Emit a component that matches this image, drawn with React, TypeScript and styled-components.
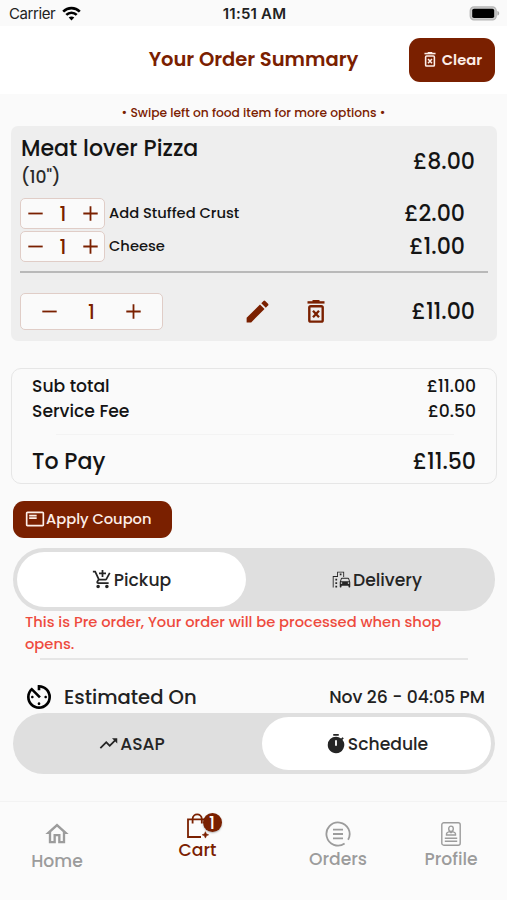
import React from 'react';
import styled, { createGlobalStyle } from 'styled-components';
import {
  MdAddShoppingCart,
  MdAvTimer,
  MdEdit,
  MdEmojiTransportation,
  MdOutlineFeaturedPlayList,
  MdOutlineHome,
  MdTimer,
  MdTrendingUp,
} from 'react-icons/md';

const brand = '#7a2000';
const ink = '#141414';

const text = { xs: 12.27, sm: 14.7, md: 17.19, lg: 19.6, xl: 22.1 };

const GlobalStyle = createGlobalStyle`
  * { box-sizing: border-box; }
  body { margin: 0; background: #fafafa; }
  svg { display: block; flex: none; }
`;

const Screen = styled.div`
  display: flex;
  flex-direction: column;
  width: 507px;
  height: 900px;
  overflow: hidden;
  background: #fafafa;
  color: ${ink};
  font-family: Poppins, Inter, sans-serif;
`;

const Label = styled.span<{ $size: number; $weight?: number; $color?: string }>`
  font-size: ${p => p.$size}px;
  font-weight: ${p => p.$weight ?? 500};
  color: ${p => p.$color ?? 'inherit'};
  line-height: 22px;
  white-space: nowrap;
`;

const StatusBar = styled.div`
  display: grid;
  grid-template-columns: 1fr auto 1fr;
  align-items: center;
  height: 26px;
  padding: 1px 7px 0 9px;
  font-family: Inter, sans-serif;
`;

const SystemText = styled.span<{ $weight: number; $track: number }>`
  font-size: 15px;
  font-weight: ${p => p.$weight};
  letter-spacing: ${p => p.$track}px;
  line-height: 22px;
  color: #222;
`;

const Carrier = styled.div`
  display: flex;
  align-items: center;
  gap: 7px;
`;

const BatterySlot = styled.div`
  justify-self: end;
`;

const Header = styled.header`
  display: grid;
  grid-template-columns: 1fr auto 1fr;
  align-items: center;
  height: 68px;
  padding: 0 12px;
  background: #fff;
`;

const HeaderTitle = styled.h1`
  grid-column: 2;
  margin: 0;
  display: flex;
`;

const ClearButton = styled.button`
  display: flex;
  align-items: center;
  justify-content: center;
  justify-self: end;
  gap: 6px;
  width: 86px;
  height: 44px;
  padding: 0 0 1px 2px;
  border: 0;
  border-radius: 11px;
  background: ${brand};
  color: #fdeee8;
  font-family: inherit;
`;

const Hint = styled.div`
  display: flex;
  justify-content: center;
  height: 32px;
  padding-top: 8px;
`;

const ItemCard = styled.section`
  flex: none;
  height: 215px;
  margin: 0 10px 0 11px;
  padding: 12px 9px 0;
  border-radius: 7px;
  background: #eee;
`;

const ItemHead = styled.div`
  display: flex;
  justify-content: space-between;
  height: 59px;
  padding: 0 13px 0 1px;
`;

const ItemName = styled.div`
  display: flex;
  flex-direction: column;
  gap: 6px;
`;

const ItemPrice = styled.div`
  display: flex;
  align-items: center;
  height: 48px;
`;

const AddonRow = styled.div`
  display: flex;
  align-items: center;
  height: 33px;
  padding-right: 23px;
  gap: 4px;
`;

const AddonName = styled.div`
  display: flex;
  flex: 1;
  padding-bottom: 2px;
`;

const Grow = styled.div`
  flex: 1;
  display: flex;
`;

const Stepper = styled.div<{ $large?: boolean }>`
  display: flex;
  align-items: center;
  justify-content: space-between;
  width: ${p => (p.$large ? 143 : 85)}px;
  height: ${p => (p.$large ? 37 : 31)}px;
  padding: ${p => (p.$large ? '0 21px' : '0 6px 0 7px')};
  border: 1px solid #e0cdc7;
  border-radius: 5px;
  background: #fafafa;
  color: ${brand};
`;

const Divider = styled.div<{ $color: string; $thickness: number; $margin: string }>`
  flex: none;
  height: ${p => p.$thickness}px;
  margin: ${p => p.$margin};
  background: ${p => p.$color};
`;

const ItemFooter = styled.div`
  display: flex;
  align-items: center;
  height: 37px;
  padding-right: 13px;
`;

const ItemActions = styled.div`
  display: flex;
  align-items: center;
  gap: 35px;
  flex: 1;
  margin-left: 80px;
  color: ${brand};
`;

const Totals = styled.section`
  flex: none;
  height: 116px;
  margin: 27px 10px 0 11px;
  padding: 4px 20px 0 20px;
  border: 1.5px solid #e6e6e6;
  border-radius: 10px;
`;

const TotalRow = styled.div<{ $height: number }>`
  display: flex;
  align-items: center;
  justify-content: space-between;
  height: ${p => p.$height}px;
`;

const CouponButton = styled.button`
  display: flex;
  flex: none;
  align-items: center;
  gap: 1px;
  width: 159px;
  height: 37px;
  margin: 17px 0 0 13px;
  padding: 0 0 2px 12px;
  border: 0;
  border-radius: 11px;
  background: ${brand};
  color: #fdeee8;
  font-family: inherit;
`;

const Toggle = styled.div<{ $height: number; $top: number }>`
  display: flex;
  flex: none;
  justify-content: space-between;
  height: ${p => p.$height}px;
  margin: ${p => p.$top}px 12px 0 13px;
  padding: 4px;
  border-radius: 31px;
  background: #dfdfdf;
`;

const Option = styled.div<{ $active?: boolean }>`
  display: flex;
  align-items: center;
  justify-content: center;
  gap: 1px;
  width: 229px;
  border-radius: 28px;
  background: ${p => (p.$active ? '#fff' : 'transparent')};
  color: #252525;
`;

const Notice = styled.p`
  flex: none;
  height: 44px;
  margin: 0;
  padding-left: 25px;
  display: flex;
  flex-direction: column;
`;

const Estimate = styled.div`
  display: flex;
  flex: none;
  align-items: center;
  gap: 9px;
  height: 32px;
  margin-top: 21px;
  padding: 0 22px 0 23px;
  color: #222;
`;

const Nav = styled.nav`
  display: grid;
  grid-template-columns: 114px 167px 114px 112px;
  flex: none;
  height: 99px;
  margin-top: auto;
  border-top: 1px solid #f3f3f3;
  background: #fbfbfb;
`;

const NavItem = styled.div<{ $active?: boolean; $top: number; $gap: number }>`
  display: flex;
  flex-direction: column;
  align-items: center;
  gap: ${p => p.$gap}px;
  padding-top: ${p => p.$top}px;
  color: ${p => (p.$active ? brand : '#9c9c9c')};
`;

const IconWithBadge = styled.div`
  position: relative;
`;

const Badge = styled.span`
  position: absolute;
  left: 16px;
  top: 0;
  display: flex;
  align-items: center;
  justify-content: center;
  width: 19px;
  height: 19px;
  border-radius: 50%;
  background: ${brand};
  color: #fff;
  font-size: 17px;
  font-weight: 500;
  box-shadow: 0 1px 2px rgba(0, 0, 0, 0.3);
`;

const WifiIcon = () => (
  <svg width="19" height="15" viewBox="0 0 19 15" fill="none" stroke="#000" strokeWidth="2.6">
    <path d="M1.2 5.6C5.8 1 13.2 1 17.8 5.6" />
    <path d="M4.3 8.9c2.9-2.9 7.5-2.9 10.4 0" />
    <path d="M9.5 14.5 6.7 11.6c1.6-1.5 4-1.5 5.6 0z" fill="#000" stroke="none" />
  </svg>
);

const BatteryIcon = () => (
  <svg width="31" height="15" viewBox="0 0 31 15">
    <rect x="1.2" y="0.9" width="26" height="13" rx="3.8" fill="#ccc" stroke="#b5b5b5" strokeWidth="1.2" />
    <rect x="3.2" y="2.8" width="22" height="9.2" rx="1.8" fill="#000" />
    <path d="M28.4 5c2.4.6 2.4 4 0 4.6z" fill="#aaa" />
  </svg>
);

const TrashIcon = ({ width, height }: { width: number; height: number }) => (
  <svg width={width} height={height} viewBox="0 0 18 23" fill="none" stroke="currentColor">
    <path d="M0.5 2.4h17" strokeWidth="2.4" />
    <path d="M5.5 1h7" strokeWidth="2" />
    <rect x="2.3" y="6.2" width="13.4" height="15.4" rx="1.4" strokeWidth="2.4" />
    <path d="M6 10.7l6 6.6M12 10.7l-6 6.6" strokeWidth="2.3" />
  </svg>
);

const MinusIcon = () => (
  <svg width="15" height="15" viewBox="0 0 15 15" stroke="currentColor" strokeWidth="1.8">
    <path d="M0.3 7.5h14.4" />
  </svg>
);

const PlusIcon = () => (
  <svg width="15" height="15" viewBox="0 0 15 15" stroke="currentColor" strokeWidth="1.8">
    <path d="M0.3 7.5h14.4M7.5 0.3v14.4" />
  </svg>
);

const BagIcon = () => (
  <svg width="22" height="26" viewBox="0 0 22 26" fill="none" stroke="currentColor" strokeWidth="1.8">
    <path d="M14 24H1V6.3h17.5V15" />
    <path d="M5.6 10.5V6.2c0-6.4 9.2-6.4 9.2 0v4.3" />
    <path d="M18.4 18.7l1 2.2 2.2.9-2.2 1-1 2.3-1-2.3-2.2-1 2.2-.9z" fill="currentColor" strokeWidth="0.6" />
  </svg>
);

const OrdersIcon = () => (
  <svg width="26" height="26" viewBox="0 0 26 26" fill="none" stroke="currentColor">
    <path d="M19.6 22.6A11.6 11.6 0 1 1 23.1 18.8" strokeWidth="1.8" />
    <path d="M8 8.6h10M8 13h10M8 17.4h10" strokeWidth="1.8" />
  </svg>
);

const ProfileIcon = () => (
  <svg width="20" height="24" viewBox="0 0 20 24" fill="none" stroke="currentColor" strokeWidth="1.4">
    <rect x="0.8" y="0.8" width="18.4" height="22.4" rx="2" />
    <ellipse cx="10" cy="6.8" rx="2.3" ry="2.7" />
    <path d="M5.5 13v-1.3c0-1 1.2-1.6 2.8-2.1l1.7 1 1.7-1c1.6.5 2.8 1.1 2.8 2.1V13z" />
    <path d="M3.8 16.3h12.4M3.8 19.3h12.4" />
  </svg>
);

const Quantity = ({ large }: { large?: boolean }) => (
  <Stepper $large={large}>
    <MinusIcon />
    <Label $size={text.lg}>1</Label>
    <PlusIcon />
  </Stepper>
);

const addons = [
  { name: 'Add Stuffed Crust', price: '£2.00' },
  { name: 'Cheese', price: '£1.00' },
];

export default function App() {
  return (
    <Screen>
      <GlobalStyle />
      <StatusBar>
        <Carrier>
          <SystemText $weight={400} $track={-0.4}>Carrier</SystemText>
          <WifiIcon />
        </Carrier>
        <SystemText $weight={600} $track={0.2}>11:51 AM</SystemText>
        <BatterySlot><BatteryIcon /></BatterySlot>
      </StatusBar>

      <Header>
        <HeaderTitle>
          <Label $size={19.5} $weight={600} $color={brand}>Your Order Summary</Label>
        </HeaderTitle>
        <ClearButton>
          <TrashIcon width={12} height={15} />
          <Label $size={text.sm} $weight={600}>Clear</Label>
        </ClearButton>
      </Header>

      <Hint>
        <Label $size={text.xs} $color={brand}>• Swipe left on food item for more options •</Label>
      </Hint>

      <ItemCard>
        <ItemHead>
          <ItemName>
            <Label $size={text.xl}>Meat lover Pizza</Label>
            <Label $size={text.md} $color="#2a2a2a">(10")</Label>
          </ItemName>
          <ItemPrice>
            <Label $size={text.xl}>£8.00</Label>
          </ItemPrice>
        </ItemHead>
        {addons.map(a => (
          <AddonRow key={a.name}>
            <Quantity />
            <AddonName><Label $size={text.sm}>{a.name}</Label></AddonName>
            <Label $size={text.xl}>{a.price}</Label>
          </AddonRow>
        ))}
        <Divider $color="#b9b9b9" $thickness={2} $margin="8px 0 20px" />
        <ItemFooter>
          <Quantity large />
          <ItemActions>
            <MdEdit size={29} />
            <TrashIcon width={18} height={23} />
          </ItemActions>
          <Label $size={text.xl}>£11.00</Label>
        </ItemFooter>
      </ItemCard>

      <Totals>
        <TotalRow $height={25}>
          <Label $size={text.md}>Sub total</Label>
          <Label $size={text.md}>£11.00</Label>
        </TotalRow>
        <TotalRow $height={26}>
          <Label $size={text.md}>Service Fee</Label>
          <Label $size={text.md}>£0.50</Label>
        </TotalRow>
        <Divider $color="#f3f3f3" $thickness={1} $margin="10px 22px 10px 24px" />
        <TotalRow $height={33}>
          <Label $size={text.xl}>To Pay</Label>
          <Label $size={text.xl}>£11.50</Label>
        </TotalRow>
      </Totals>

      <CouponButton>
        <MdOutlineFeaturedPlayList size={20} />
        <Label $size={text.sm}>Apply Coupon</Label>
      </CouponButton>

      <Toggle $height={63} $top={10}>
        <Option $active>
          <MdAddShoppingCart size={21} />
          <Label $size={text.md}>Pickup</Label>
        </Option>
        <Option>
          <MdEmojiTransportation size={21} />
          <Label $size={text.md}>Delivery</Label>
        </Option>
      </Toggle>

      <Notice>
        <Label $size={text.sm} $color="#ee4b3e">This is Pre order, Your order will be processed when shop</Label>
        <Label $size={text.sm} $color="#ee4b3e">opens.</Label>
      </Notice>
      <Divider $color="#e6e6e6" $thickness={2} $margin="3px 39px 0 40px" />

      <Estimate>
        <MdAvTimer size={32} color="#000" />
        <Grow>
          <Label $size={text.lg}>Estimated On</Label>
        </Grow>
        <Label $size={text.md}>Nov 26 - 04:05 PM</Label>
      </Estimate>

      <Toggle $height={61} $top={0}>
        <Option>
          <MdTrendingUp size={21} />
          <Label $size={text.md}>ASAP</Label>
        </Option>
        <Option $active>
          <MdTimer size={22} />
          <Label $size={text.md}>Schedule</Label>
        </Option>
      </Toggle>

      <Nav>
        <NavItem $top={18} $gap={2}>
          <MdOutlineHome size={28} />
          <Label $size={text.md}>Home</Label>
        </NavItem>
        <NavItem $active $top={11} $gap={0}>
          <IconWithBadge>
            <BagIcon />
            <Badge>1</Badge>
          </IconWithBadge>
          <Label $size={text.md}>Cart</Label>
        </NavItem>
        <NavItem $top={19} $gap={1}>
          <OrdersIcon />
          <Label $size={text.md}>Orders</Label>
        </NavItem>
        <NavItem $top={20} $gap={2}>
          <ProfileIcon />
          <Label $size={text.md}>Profile</Label>
        </NavItem>
      </Nav>
    </Screen>
  );
}
